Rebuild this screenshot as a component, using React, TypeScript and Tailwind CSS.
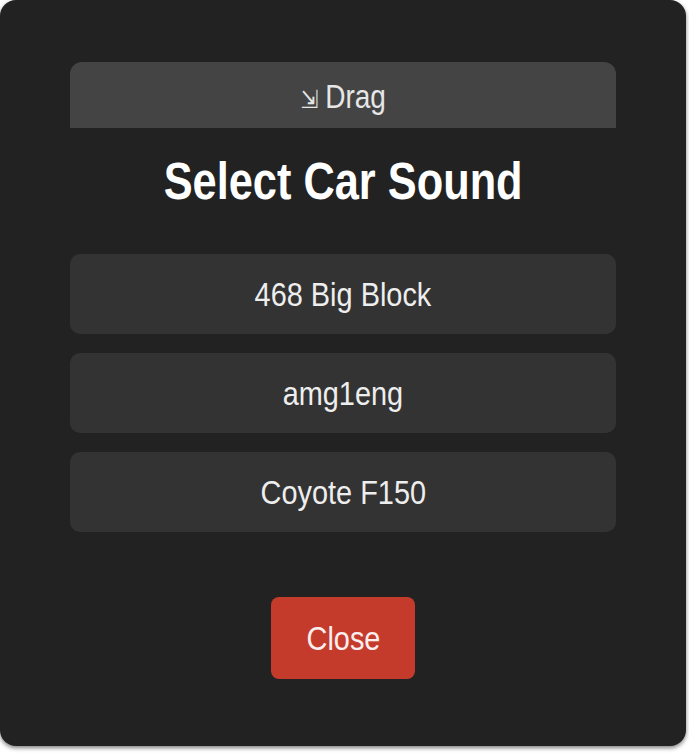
const sounds = ['468 Big Block', 'amg1eng', 'Coyote F150'];

export default function App() {
  return (
    <div className="min-h-screen bg-white font-['Liberation_Sans',Arial,sans-serif]">
      <div className="w-[686px] h-[746px] rounded-[16px] bg-[#222222] shadow-[0_2px_4px_rgba(0,0,0,0.5)] px-[70px] pt-[62px] flex flex-col">
        <div className="h-[66px] rounded-t-[12px] bg-[#444444] flex items-center justify-center text-[#e6e6e6]">
          <span className="inline-block text-[33px] leading-none scale-x-[0.85] translate-y-[1px]">
            <span className="font-['DejaVu_Sans',sans-serif] text-[25px] mr-[8px]">⇲</span>Drag
          </span>
        </div>

        <h2 className="mt-[28px] mb-[47px] text-center text-white font-bold text-[51px] leading-none">
          <span className="inline-block scale-x-[0.85]">Select Car Sound</span>
        </h2>

        <div className="flex flex-col gap-[19px]">
          {sounds.map((s) => (
            <button
              key={s}
              className="h-[80px] rounded-[10px] bg-[#333333] flex items-center justify-center text-[#eeeeee] text-[34px]"
            >
              <span className="inline-block scale-x-[0.85]">{s}</span>
            </button>
          ))}
        </div>

        <div className="mt-[65px] flex justify-center">
          <button className="w-[144px] h-[82px] rounded-[8px] bg-[#c43b2c] text-[#fbeeee] text-[34px] flex items-center justify-center">
            <span className="inline-block scale-x-[0.85]">Close</span>
          </button>
        </div>
      </div>
    </div>
  );
}
